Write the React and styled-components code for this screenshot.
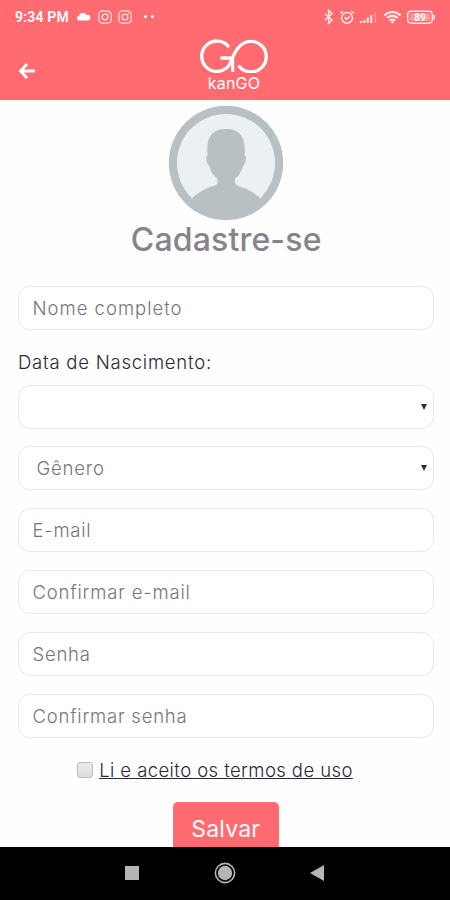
import styled, { createGlobalStyle } from "styled-components";

const fields = [
  { id: "email", label: "E-mail", spacing: 0.75 },
  { id: "emailConfirm", label: "Confirmar e-mail", spacing: 0.82 },
  { id: "password", label: "Senha", spacing: 0.75 },
  { id: "passwordConfirm", label: "Confirmar senha", spacing: 0.78 },
];

const Instagram = () => (
  <svg width="14" height="14" viewBox="0 0 14 14" fill="none" stroke="#fff" strokeOpacity="0.8">
    <rect x="0.8" y="0.8" width="12.4" height="12.4" rx="3.6" strokeWidth="1.2" />
    <circle cx="7" cy="7" r="2.9" strokeWidth="1.2" />
    <circle cx="10.4" cy="3.6" r="0.4" />
  </svg>
);

const StatusIcons = () => (
  <svg width="114" height="16" viewBox="0 0 114 16" fill="none" stroke="#fff" strokeOpacity="0.85">
    <path d="M2 4.8 L9 11 L5.6 14.4 V1.4 L9 4.8 L2 11" strokeWidth="1.5" />
    <circle cx="24" cy="8.8" r="5.4" strokeWidth="1.5" />
    <path d="M17.4 4.2 L20 2 M28 2 L30.6 4.2 M21.5 8.3 L23.6 10.3 L26.8 7.2" strokeWidth="1.5" />
    <path d="M38 14 V12 M41.4 14 V11 M44.8 14 V8.5 M48.2 14 V6" strokeWidth="2" />
    <path d="M52.4 14 V3" strokeWidth="1.6" strokeOpacity="0.35" />
    <path d="M61.2 6.3 Q69.4 -0.5 77.6 6.3 M63.9 9 Q69.4 4.5 74.9 9 M66.6 11.6 Q69.4 9.5 72.2 11.6" strokeWidth="2.2" />
    <circle cx="69.4" cy="13.4" r="0.7" fill="#fff" />
    <rect x="84.7" y="2.2" width="24.6" height="12" rx="3.4" strokeWidth="1.4" />
    <rect x="87" y="4.5" width="20" height="7.5" rx="1" fill="#fff" fillOpacity="0.3" stroke="none" />
    <path d="M111.2 6 V10.5" strokeWidth="1.6" />
    <text x="97" y="11.8" textAnchor="middle" fontFamily="Roboto, sans-serif" fontSize="10" fontWeight="700" fill="#fff" stroke="none">
      89
    </text>
  </svg>
);

const Logo = () => (
  <svg width="70" height="34" viewBox="0 0 70 34" fill="none" stroke="#fff" strokeWidth="3.3">
    <path d="M30 8 A15.2 15.2 0 1 0 27.5 29 C30.5 26.5 31.5 24 33 20" />
    <path d="M21.5 19 H30 Q33.6 19 33.6 23 V33" />
    <path d="M33 20 C35.5 14 37 10.5 40.2 7.8 A15.3 15.3 0 1 1 39.5 26.5" />
  </svg>
);

const Avatar = () => (
  <svg width="116" height="116" viewBox="0 0 116 116">
    <circle cx="58" cy="58" r="57.2" fill="#b9c0c4" />
    <circle cx="58" cy="58" r="49" fill="#ebf1f3" />
    <path
      fill="#b9c0c4"
      d="M24 93 C31 87 40 82 47 80.5 C50 79 50 77 49 73 C44.5 70 42.5 66 41.5 61 C38.5 59 37 53 39.5 50 C38 33 43 24 58 24 C73 24 78 33 76.5 50 C79.5 52 77.5 59 75 61 C73.5 66 71 71 67.5 73 C66 77 67 79.5 70 81 C78 83 85 87 92.5 93 C84 103 72 109 58 109 C44 109 32 103 24 93 Z"
    />
  </svg>
);

const App = () => {
  return (
    <Screen>
      <GlobalStyle />
      <Header>
        <StatusBar>
          <Clock>9:34 PM</Clock>
          <svg width="15" height="9" viewBox="0 0 15 9">
            <path d="M2.5 8.5 A2.3 2.3 0 0 1 3 4 A4 4 0 0 1 10.5 3 A2.9 2.9 0 0 1 12.5 8.5 Z" fill="#fff" />
          </svg>
          <Instagram />
          <Instagram />
          <Dots>
            <Dot />
            <Dot />
          </Dots>
          <StatusRight>
            <StatusIcons />
          </StatusRight>
        </StatusBar>
        <Toolbar>
          <BackButton aria-label="Voltar">
            <svg width="18" height="16" viewBox="0 0 18 16" fill="none" stroke="#fff" strokeWidth="2.8">
              <path d="M9 1 L2.5 8 L9 15 M2.5 8 H17" />
            </svg>
          </BackButton>
          <Brand>
            <Logo />
            <BrandName>kanGO</BrandName>
          </Brand>
        </Toolbar>
      </Header>
      <Content>
        <Avatar />
        <Title>Cadastre-se</Title>
        <Form>
          <Field>
            <FieldText $spacing={1}>Nome completo</FieldText>
          </Field>
          <Label>Data de Nascimento:</Label>
          <Field>
            <Arrow />
          </Field>
          <Field $select>
            <FieldText $spacing={0.8}>Gênero</FieldText>
            <Arrow />
          </Field>
          {fields.map((field) => (
            <Field key={field.id}>
              <FieldText $spacing={field.spacing}>{field.label}</FieldText>
            </Field>
          ))}
        </Form>
        <Terms>
          <Checkbox />
          <TermsLink>Li e aceito os termos de uso</TermsLink>
        </Terms>
        <SaveButton>Salvar</SaveButton>
      </Content>
      <NavBar>
        <svg width="14" height="14">
          <rect width="14" height="14" fill="#b5b5b5" />
        </svg>
        <svg width="22" height="22" viewBox="0 0 22 22">
          <circle cx="11" cy="11" r="9.6" fill="none" stroke="#b5b5b5" strokeWidth="1.6" />
          <circle cx="11" cy="11" r="7.2" fill="#b5b5b5" />
        </svg>
        <svg width="14" height="16" viewBox="0 0 14 16">
          <path d="M0 8 L14 0 V16 Z" fill="#b5b5b5" />
        </svg>
      </NavBar>
    </Screen>
  );
};

export default App;

const GlobalStyle = createGlobalStyle`
  * {
    box-sizing: border-box;
  }

  body {
    margin: 0;
    font-family: Inter, sans-serif;
    background: #fff;
  }

  svg {
    display: block;
    flex: none;
  }
`;

const Screen = styled.div`
  width: 450px;
  height: 900px;
  display: flex;
  flex-direction: column;
  overflow: hidden;
  background: #fefefe;
`;

const Header = styled.header`
  height: 99.5px;
  flex: none;
  background: #ff6b70;
`;

const StatusBar = styled.div`
  height: 33px;
  padding: 0 13px 0 15px;
  display: flex;
  align-items: center;
`;

const Clock = styled.span`
  width: 61px;
  font-family: Roboto, sans-serif;
  font-size: 14px;
  font-weight: 600;
  letter-spacing: 0.2px;
  white-space: nowrap;
  color: #fff;

  & ~ svg {
    margin-right: 6.5px;
  }
`;

const Dots = styled.div`
  display: flex;
  gap: 4px;
  margin-left: 5px;
`;

const Dot = styled.i`
  width: 3px;
  height: 3px;
  border-radius: 50%;
  background: #fff;
`;

const StatusRight = styled.div`
  margin-left: auto;
`;

const Toolbar = styled.div`
  height: 66px;
  padding: 0 18px;
  display: grid;
  grid-template-columns: 1fr 70px 1fr;
`;

const BackButton = styled.button`
  align-self: start;
  width: 18px;
  margin-top: 30px;
  padding: 0;
  border: none;
  background: none;
`;

const Brand = styled.div`
  display: flex;
  flex-direction: column;
  align-items: center;
  padding-top: 6px;
  margin-left: 9px;
  width: 70px;
`;

const BrandName = styled.span`
  font-size: 16px;
  line-height: 20px;
  letter-spacing: 0.2px;
  color: #fff;
`;

const Content = styled.main`
  flex: 1;
  min-height: 0;
  overflow: hidden;
  padding: 5.5px 16px 0 17.5px;
  display: flex;
  flex-direction: column;
  align-items: center;
`;

const Title = styled.h1`
  margin: 0 0 27px 1px;
  font-size: 32px;
  font-weight: 500;
  line-height: 38px;
  letter-spacing: 0.15px;
  color: #85838c;
`;

const Form = styled.form`
  width: 100%;
  display: flex;
  flex-direction: column;
  gap: 17.8px;
`;

const Field = styled.div`
  height: 44px;
  flex: none;
  padding: 0 6px 0 ${({ $select }) => ($select ? 18 : 14)}px;
  display: flex;
  align-items: center;
  border: 1.5px solid #e8e8ea;
  border-radius: 12px;
  background: #fff;
`;

const FieldText = styled.span`
  font-size: 18.5px;
  font-weight: 300;
  letter-spacing: ${({ $spacing }) => $spacing}px;
  color: #74767b;
`;

const Arrow = styled.i`
  margin-left: auto;
  border: 3.5px solid transparent;
  border-top: 6px solid #303030;
  border-bottom: none;
`;

const Label = styled.label`
  margin: 1px 0 -8px 0.5px;
  font-size: 18.5px;
  font-weight: 300;
  line-height: 26px;
  letter-spacing: 0.77px;
  color: #2b2838;
`;

const Terms = styled.div`
  display: flex;
  align-items: center;
  gap: 6px;
  height: 24px;
  margin: 20.5px 21.5px 0 0;
  flex: none;
`;

const Checkbox = styled.span`
  width: 16px;
  height: 16px;
  border: 1.5px solid #bcbcbc;
  border-radius: 3px;
  background: linear-gradient(#ececec, #dedede);
`;

const TermsLink = styled.a`
  font-size: 18.5px;
  font-weight: 300;
  line-height: 24px;
  letter-spacing: 0.42px;
  text-decoration: underline;
  color: #2b2838;
`;

const SaveButton = styled.button`
  width: 106px;
  height: 54px;
  flex: none;
  margin-top: 20.2px;
  padding: 0;
  border: none;
  border-radius: 5px;
  font-family: inherit;
  font-size: 23px;
  letter-spacing: 0.2px;
  color: #fff;
  background: #ff6b70;
`;

const NavBar = styled.nav`
  height: 53.5px;
  flex: none;
  padding: 0 126px 0 125px;
  display: flex;
  align-items: center;
  justify-content: space-between;
  background: #000;
`;
